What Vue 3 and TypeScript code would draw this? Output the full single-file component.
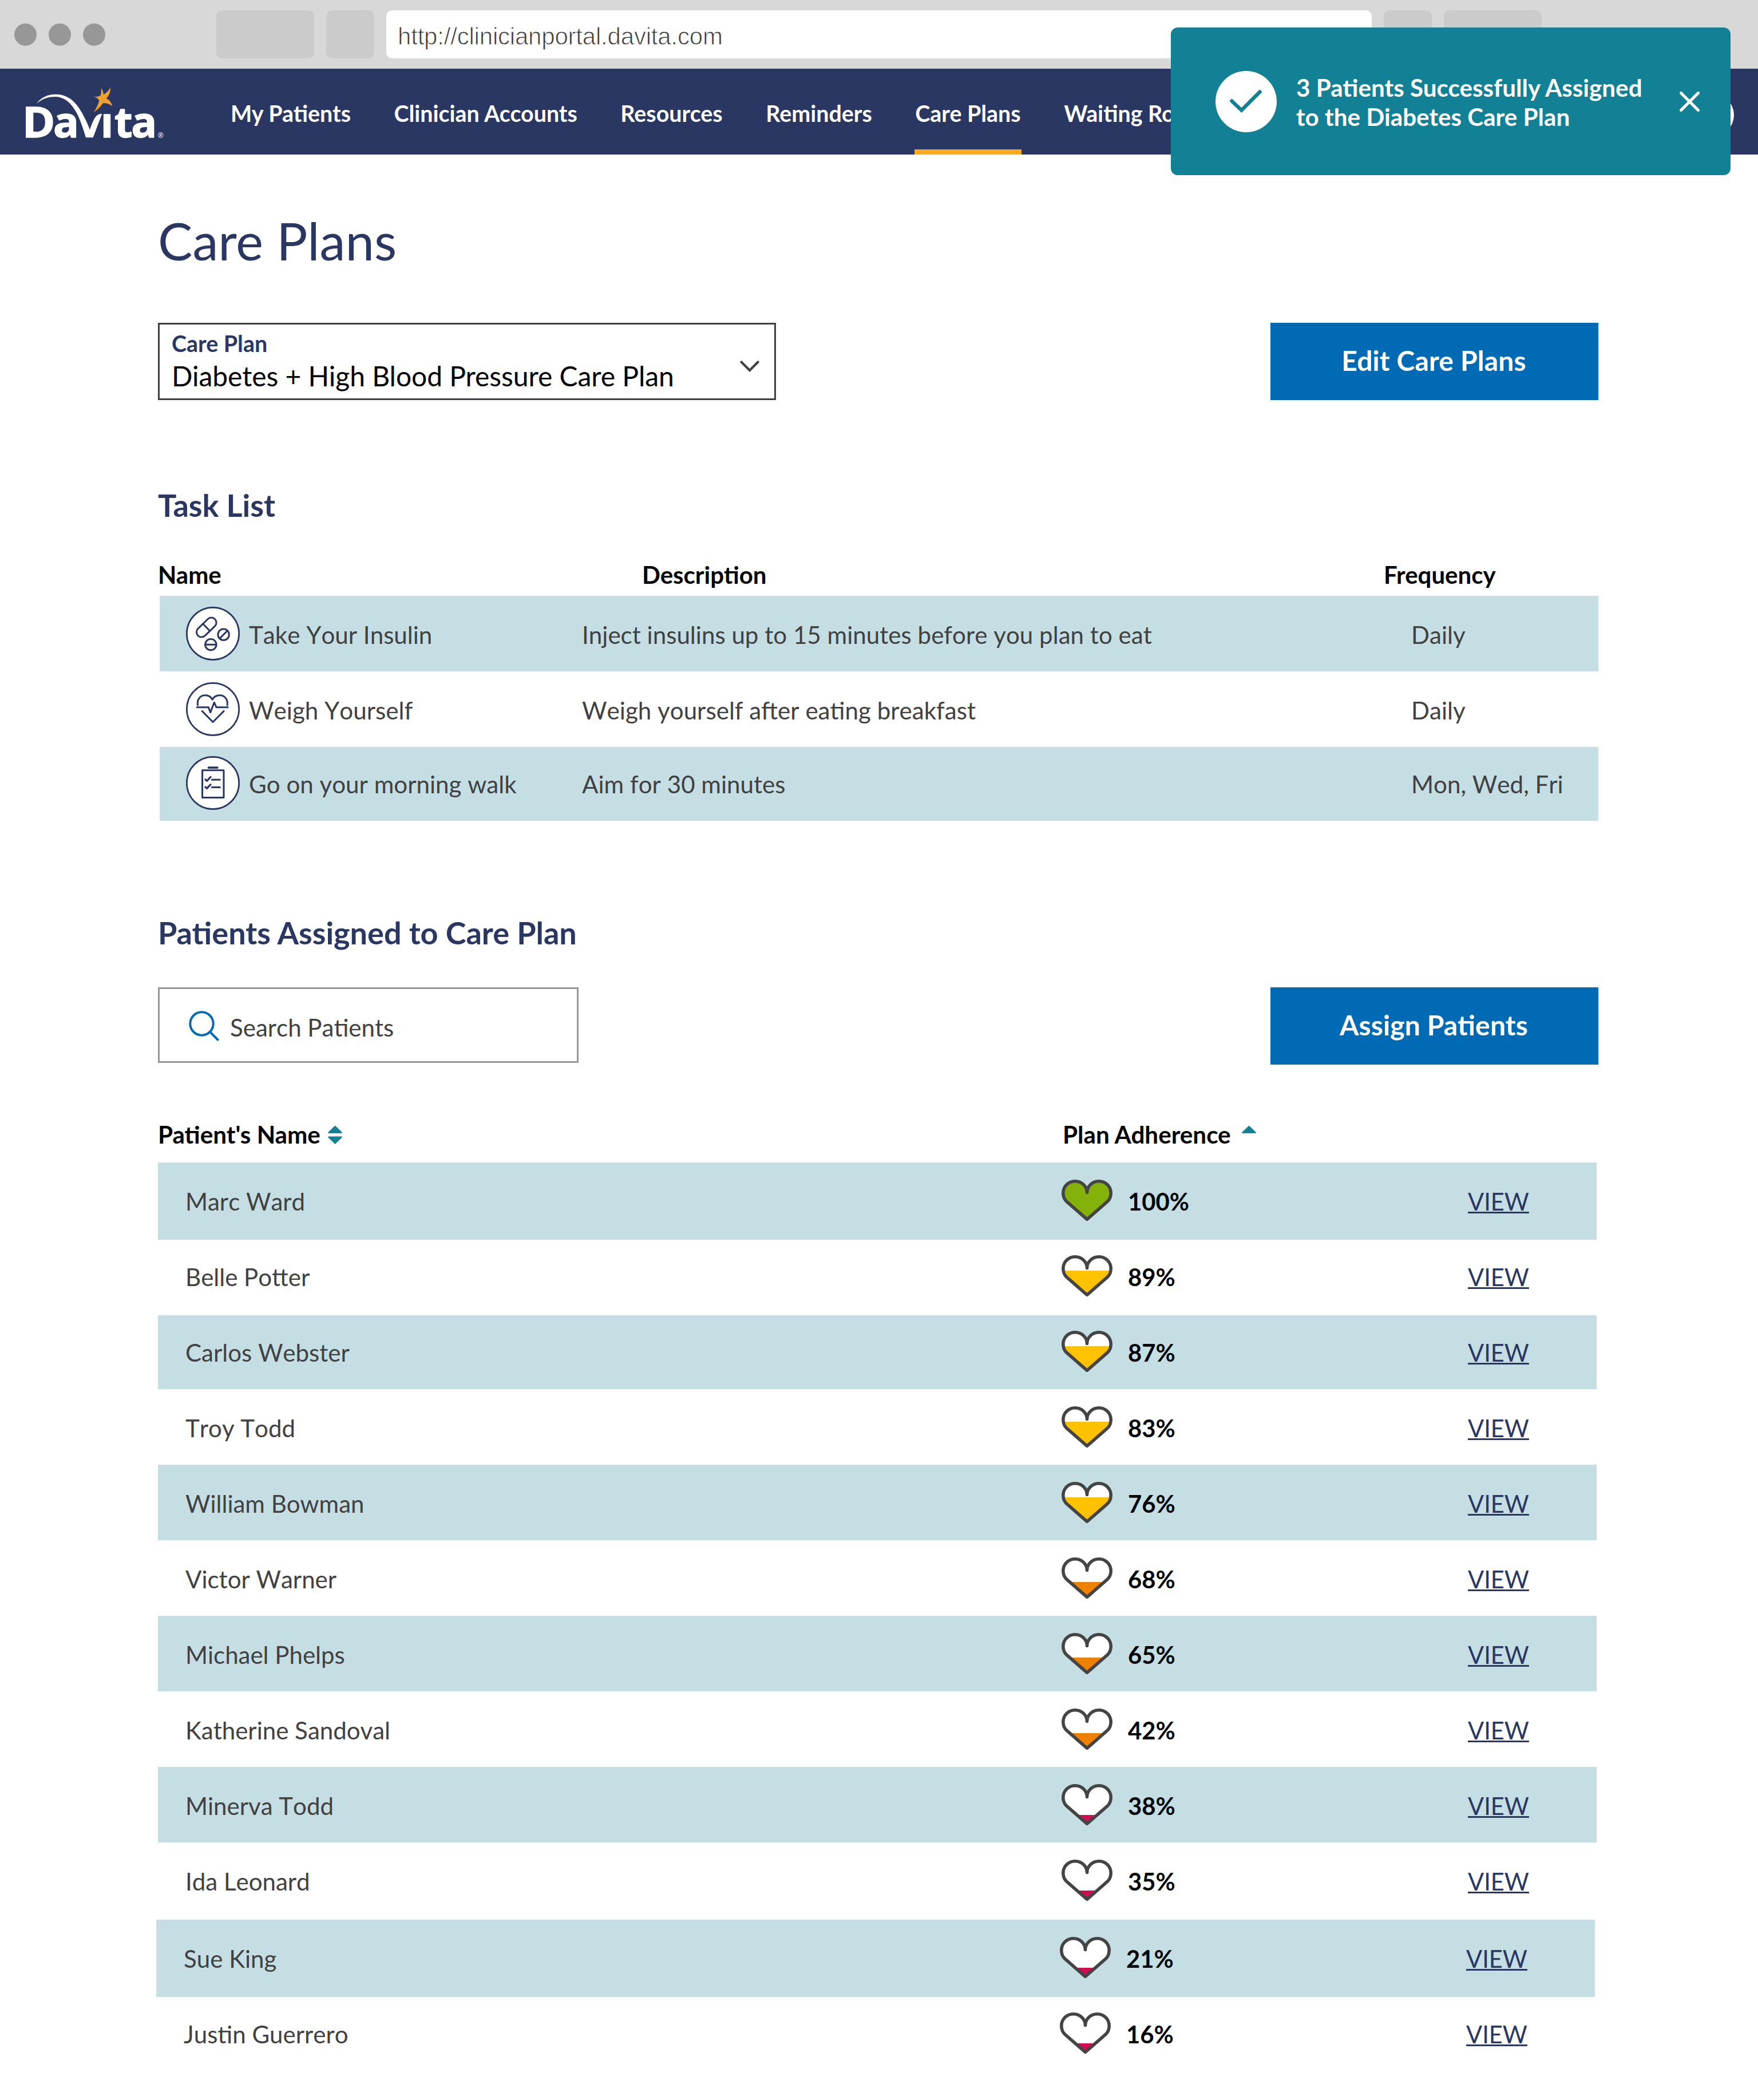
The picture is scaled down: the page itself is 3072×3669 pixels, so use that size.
<script setup lang="ts">
interface Task {
  icon: 'pills' | 'heart' | 'clipboard'
  name: string
  description: string
  frequency: string
}

interface Patient {
  name: string
  adherence: number
  size?: 'tall' | 'short'
  raised?: boolean
  outdented?: boolean
}

const navItems: string[] = ['My Patients', 'Clinician Accounts', 'Resources', 'Reminders', 'Care Plans', 'Waiting Room']

const tasks: Task[] = [
  { icon: 'pills', name: 'Take Your Insulin', description: 'Inject insulins up to 15 minutes before you plan to eat', frequency: 'Daily' },
  { icon: 'heart', name: 'Weigh Yourself', description: 'Weigh yourself after eating breakfast', frequency: 'Daily' },
  { icon: 'clipboard', name: 'Go on your morning walk', description: 'Aim for 30 minutes', frequency: 'Mon, Wed, Fri' },
]

const patients: Patient[] = [
  { name: 'Marc Ward', adherence: 100, size: 'tall' },
  { name: 'Belle Potter', adherence: 89, raised: true },
  { name: 'Carlos Webster', adherence: 87, size: 'short', raised: true },
  { name: 'Troy Todd', adherence: 83 },
  { name: 'William Bowman', adherence: 76 },
  { name: 'Victor Warner', adherence: 68 },
  { name: 'Michael Phelps', adherence: 65 },
  { name: 'Katherine Sandoval', adherence: 42 },
  { name: 'Minerva Todd', adherence: 38 },
  { name: 'Ida Leonard', adherence: 35, size: 'tall' },
  { name: 'Sue King', adherence: 21, size: 'tall', outdented: true },
  { name: 'Justin Guerrero', adherence: 16, raised: true, outdented: true },
]

const heartPath =
  'M44.5 22.5C44.5 11.5 35 2.8 23.6 2.8C12 2.8 2.8 12 2.8 23.6C2.8 29.5 5 34.8 9 38.4L44.5 69.4L80 38.4C84 34.8 86.2 29.5 86.2 23.6C86.2 12 77 2.8 65.4 2.8C54 2.8 44.5 11.5 44.5 22.5Z'

// Adherence band: where the fill starts inside the heart, and its colour.
function band(value: number): { top: number; color: string } {
  if (value === 100) return { top: 0, color: '#85b20a' }
  if (value >= 75) return { top: 27, color: '#ffc200' }
  if (value >= 40) return { top: 43, color: '#ee8200' }
  return { top: 54, color: '#d30d55' }
}
</script>

<template>
  <div class="page">
    <div class="chrome">
      <span class="dot" /><span class="dot" /><span class="dot" />
      <span class="tab back" /><span class="tab reload" />
      <div class="url">http://clinicianportal.davita.com</div>
      <span class="tab small" /><span class="tab wide" />
    </div>

    <header class="navbar">
      <svg class="logo" viewBox="0 0 960 450" aria-label="DaVita">
        <g fill="#fff" font-family="'Open Sans', 'Noto Sans', sans-serif" font-weight="700" font-size="221">
          <g stroke="#fff" stroke-width="4" stroke-linejoin="round">
            <text x="116" y="360" textLength="173" lengthAdjust="spacingAndGlyphs">D</text>
            <text x="279" y="360" textLength="135" lengthAdjust="spacingAndGlyphs">a</text>
            <text x="527" y="360">ı</text>
            <text x="599" y="360">t</text>
            <text x="688" y="360" textLength="135" lengthAdjust="spacingAndGlyphs">a</text>
          </g>
          <text x="827" y="363" font-size="36" font-weight="400">®</text>
        </g>
        <path fill="#fff" d="M192 183C214 151 250 134 293 134C352 134 397 170 430 232C448 266 461 292 471 320C480 292 492 262 506 247C514 239 524 236 535 236L488 361H450C438 322 424 276 402 232C374 180 338 148 291 147C250 147 218 160 192 183Z" />
        <path fill="#eea033" d="M530 101C537 110 542 122 543 135C558 127 572 114 578 96C580 120 574 140 557 155C574 164 585 178 589 197C574 184 556 179 540 181C525 202 509 217 490 229C505 209 515 188 520 166C513 156 500 147 483 145C500 149 514 147 527 140C531 128 531 115 530 101Z" />
      </svg>
      <nav class="menu">
        <a v-for="item in navItems" :key="item" :class="{ active: item === 'Care Plans' }">{{ item }}</a>
      </nav>
      <span class="avatar" />
    </header>

    <aside class="toast">
      <svg class="toast-check" viewBox="0 0 107 107">
        <circle cx="53.5" cy="53.5" r="53.5" fill="#fff" />
        <path d="M28.5 52.5L45.5 68.5L77.5 36.5" fill="none" stroke="#128095" stroke-width="6.5" stroke-linecap="round" />
      </svg>
      <p>3 Patients Successfully Assigned<br>to the Diabetes Care Plan</p>
      <svg class="toast-close" viewBox="0 0 35 35">
        <path d="M2.5 2.5L32.5 32.5M32.5 2.5L2.5 32.5" stroke="#fff" stroke-width="5" stroke-linecap="round" />
      </svg>
    </aside>

    <main>
      <h1>Care Plans</h1>

      <div class="bar">
        <div class="select">
          <div>
            <div class="select-label">Care Plan</div>
            <div class="select-value">Diabetes + High Blood Pressure Care Plan</div>
          </div>
          <svg class="chevron" viewBox="0 0 34 20">
            <path d="M2.5 2.5L17 17L31.5 2.5" fill="none" stroke="#414141" stroke-width="4.2" stroke-linecap="round" />
          </svg>
        </div>
        <button class="primary">Edit Care Plans</button>
      </div>

      <h2 class="tasks-title">Task List</h2>
      <div class="task-head">
        <span>Name</span><span>Description</span><span>Frequency</span>
      </div>
      <div class="tasks">
        <div v-for="task in tasks" :key="task.name" class="task">
          <svg v-if="task.icon === 'pills'" class="task-icon" viewBox="46 61 280 280">
            <circle cx="186" cy="201" r="136" class="ring" />
            <g class="stroke">
              <rect x="91" y="142.500" width="123" height="52" rx="26" transform="rotate(-44 152.500 168.500)" />
              <path d="M135 151L170 187" />
              <circle cx="241.500" cy="206" r="29" />
              <path d="M222 226L261 186" />
              <circle cx="175" cy="258" r="29" />
              <path d="M147 258H203" />
            </g>
          </svg>
          <svg v-else-if="task.icon === 'heart'" class="task-icon" viewBox="46 457 280 280">
            <circle cx="186" cy="597" r="136" class="ring" />
            <g class="stroke">
              <path d="M107 576C103 548 118 525 146 525C163 525 176 533 183 547C191 533 204 525 221 525C249 525 265 548 261 576" />
              <path d="M103 587H163L173 614L193 562L204 587H264" />
              <path d="M130 607L186 664L243 607" />
            </g>
          </svg>
          <svg v-else class="task-icon" viewBox="46 844 280 280">
            <circle cx="186" cy="984" r="136" class="ring" />
            <g class="stroke">
              <rect x="131" y="917.500" width="111.500" height="142.500" />
              <path d="M164 904H209" stroke-width="11" />
              <path d="M147 966L155 973L174 953M147 1005L155 1012L174 992" stroke-width="10" />
              <path d="M181 967H223M181 1006H223" />
            </g>
          </svg>
          <span class="task-name">{{ task.name }}</span>
          <span class="task-desc">{{ task.description }}</span>
          <span class="task-freq">{{ task.frequency }}</span>
        </div>
      </div>

      <h2 class="patients-title">Patients Assigned to Care Plan</h2>
      <div class="bar">
        <div class="search">
          <svg viewBox="0 0 54 54">
            <circle cx="23.500" cy="23.500" r="20.200" />
            <path d="M38 38L51.500 51.500" />
          </svg>
          <span>Search Patients</span>
        </div>
        <button class="primary">Assign Patients</button>
      </div>

      <div class="patient-head">
        <span class="col-name">Patient's Name
          <svg class="sort" viewBox="0 0 25 33">
            <path d="M12.500 0.500L24.500 12V14H0.500V12ZM0.500 19.500H24.500V21.500L12.500 33L0.500 21.500Z" fill="#128095" />
          </svg>
        </span>
        <span class="col-adherence">Plan Adherence
          <svg class="sort asc" viewBox="0 0 25 33">
            <path d="M12.500 0.500L24.500 12V14H0.500V12Z" fill="#128095" />
          </svg>
        </span>
      </div>
      <div class="patients">
        <div
          v-for="p in patients"
          :key="p.name"
          class="patient"
          :class="[p.size, { raised: p.raised, outdented: p.outdented }]"
        >
          <div class="cells">
            <span class="patient-name">{{ p.name }}</span>
            <svg class="gauge" viewBox="0 0 89 73">
              <defs>
                <clipPath :id="`level-${p.adherence}`">
                  <rect x="0" :y="band(p.adherence).top" width="89" height="73" />
                </clipPath>
              </defs>
              <path :d="heartPath" fill="#fff" />
              <path :d="heartPath" :fill="band(p.adherence).color" :clip-path="`url(#level-${p.adherence})`" />
              <path :d="heartPath" fill="none" stroke="#444" stroke-width="5.600" stroke-linejoin="round" />
            </svg>
            <span class="percent">{{ p.adherence }}%</span>
            <a class="view">VIEW</a>
          </div>
        </div>
      </div>
    </main>
  </div>
</template>

<style>
html,
body {
  margin: 0;
  background: #fff;
}
</style>

<style scoped>
.page {
  position: relative;
  width: 3072px;
  height: 3669px;
  overflow: hidden;
  background: #fff;
  font-family: Lato, Carlito, sans-serif;
  font-size: 42px;
  color: #414141;
}

.page * {
  box-sizing: border-box;
}

.page svg {
  display: block;
  flex: none;
}

/* Browser chrome */
.chrome {
  display: flex;
  align-items: center;
  height: 120px;
  padding-left: 25px;
  background: #d8d8d8;
}

.dot {
  width: 39px;
  height: 39px;
  margin-right: 21px;
  border-radius: 50%;
  background: #979797;
}

.tab {
  height: 84px;
  border-radius: 10px;
  background: #cbcbcb;
}

.back {
  width: 171px;
  margin: 0 21px 0 173px;
}

.reload {
  width: 84px;
  margin-right: 21px;
}

.small {
  width: 84px;
  margin: 0 21px;
}

.wide {
  width: 171px;
}

.url {
  width: 1722px;
  height: 84px;
  padding-left: 20px;
  border-radius: 10px;
  background: #fff;
  color: #3c3c3c;
  font: 300 42px/91px 'Liberation Sans', Arial, sans-serif;
  letter-spacing: -0.2px;
  -webkit-text-stroke: 0.9px #fff;
}

/* Navigation */
.navbar {
  display: flex;
  height: 150px;
  background: #293762;
}

.logo {
  width: 320px;
  height: 150px;
}

.menu {
  display: flex;
  gap: 73.5px;
  margin-left: 82px;
  color: #fff;
  font-size: 39.4px;
  font-weight: 700;
  line-height: 156px;
  white-space: nowrap;
}

.menu a {
  height: 150px;
  padding: 0 1px;
}

.menu .active {
  border-bottom: 9px solid #ffa81c;
}

.avatar {
  width: 76px;
  height: 76px;
  margin: 43px 42px 0 auto;
  border-radius: 50%;
  background: #fff;
}

.toast {
  position: absolute;
  top: 48px;
  left: 2046px;
  display: flex;
  align-items: center;
  width: 978px;
  height: 258px;
  padding: 0 54px 0 78px;
  border-radius: 12px;
  background: #128095;
  color: #fff;
}

.toast-check {
  width: 107px;
  height: 107px;
}

.toast p {
  margin: 1px 0 0 34px;
  font-size: 42.2px;
  font-weight: 700;
  line-height: 51px;
  white-space: nowrap;
}

.toast-close {
  width: 35px;
  height: 35px;
  margin-left: auto;
}

/* Page content */
main {
  padding: 100px 279px 0 276px;
}

h1 {
  margin: 0;
  color: #293762;
  font-size: 90.4px;
  font-weight: 400;
  line-height: 100px;
}

.bar {
  display: flex;
  justify-content: space-between;
}

h1 + .bar {
  margin-top: 94px;
}

.select {
  display: flex;
  justify-content: space-between;
  width: 1080px;
  height: 135px;
  padding: 12px 26px 0 21px;
  border: 3px solid #414141;
}

.select-label {
  color: #293762;
  font-size: 39.4px;
  font-weight: 700;
  line-height: 42px;
}

.select-value {
  color: #000;
  font-size: 47.9px;
  line-height: 72px;
  white-space: nowrap;
}

.chevron {
  width: 34px;
  height: 20px;
  margin-top: 51px;
}

.primary {
  width: 573px;
  height: 135px;
  padding: 0 2px 4px 0;
  border: 0;
  background: #006ab4;
  color: #fff;
  font: 700 48.3px/131px Lato, Carlito, sans-serif;
}

h2 {
  margin: 0;
  color: #293762;
  font-size: 54px;
  font-weight: 700;
  line-height: 64px;
}

.tasks-title {
  margin-top: 152px;
}

.task-head {
  display: flex;
  height: 52px;
  margin-top: 63px;
  color: #000;
  font-weight: 700;
  line-height: 52px;
}

.task-head span:nth-child(1) {
  width: 846px;
}

.task-head span:nth-child(2) {
  width: 1296px;
}

.tasks {
  margin: 11px 0 0 3px;
}

.task {
  display: flex;
  align-items: center;
  height: 132px;
  padding-left: 46px;
  font-size: 42.1px;
  line-height: 52px;
  white-space: nowrap;
  font-kerning: none;
}

.task:last-child {
  height: 129px;
  padding-bottom: 3px;
}

.task:nth-child(odd),
.patient:nth-child(odd) {
  background: #c4dee3;
}

.task span {
  padding-top: 3px;
}

.task-icon {
  width: 94px;
  height: 94px;
}

.ring {
  fill: #fff;
  stroke: #293762;
  stroke-width: 8px;
}

.stroke {
  fill: none;
  stroke: #293762;
  stroke-width: 9px;
  stroke-linecap: round;
  stroke-linejoin: round;
}

.task-name {
  width: 582px;
  margin-left: 16px;
}

.task-desc {
  width: 1449px;
}

.patients-title {
  margin-top: 164px;
}

.patients-title + .bar {
  margin-top: 63px;
}

.search {
  display: flex;
  width: 735px;
  height: 132px;
  padding: 37px 0 0 50px;
  border: 3px solid #979797;
  font-kerning: none;
}

.search svg {
  width: 54px;
  height: 54px;
  fill: none;
  stroke: #006ab4;
  stroke-width: 4px;
  stroke-linecap: round;
}

.search span {
  margin: 5px 0 0 19px;
  line-height: 50px;
}

.patient-head {
  display: flex;
  height: 52px;
  margin-top: 96px;
  color: #000;
  font-size: 42.2px;
  font-weight: 700;
  line-height: 52px;
}

.patient-head span {
  display: flex;
}

.patient-head .sort {
  width: 25px;
  height: 33px;
  margin: 10px 0 0 13px;
}

.patient-head .asc {
  margin-left: 19px;
}

.col-name {
  width: 1581px;
}

.patients {
  width: 2514px;
  margin-top: 23px;
}

.patient {
  height: 132px;
}

.tall {
  height: 135px;
}

.short {
  height: 129px;
}

.outdented {
  margin-left: -3px;
  margin-right: 3px;
}

.cells {
  display: flex;
  height: 132px;
  line-height: 137px;
}

.raised .cells {
  transform: translateY(-3px);
}

.patient-name {
  width: 1531px;
  margin-left: 48px;
  font-kerning: none;
}

.gauge {
  width: 89px;
  height: 73px;
  margin-top: 29.5px;
}

.percent {
  width: 594px;
  margin-left: 27px;
  color: #000;
  font-size: 41.8px;
  font-weight: 700;
}

.view {
  color: #293762;
  font-size: 41.6px;
  font-kerning: none;
  text-decoration: underline;
  text-decoration-thickness: 3px;
  text-underline-offset: 2px;
  text-decoration-skip-ink: none;
}
</style>
